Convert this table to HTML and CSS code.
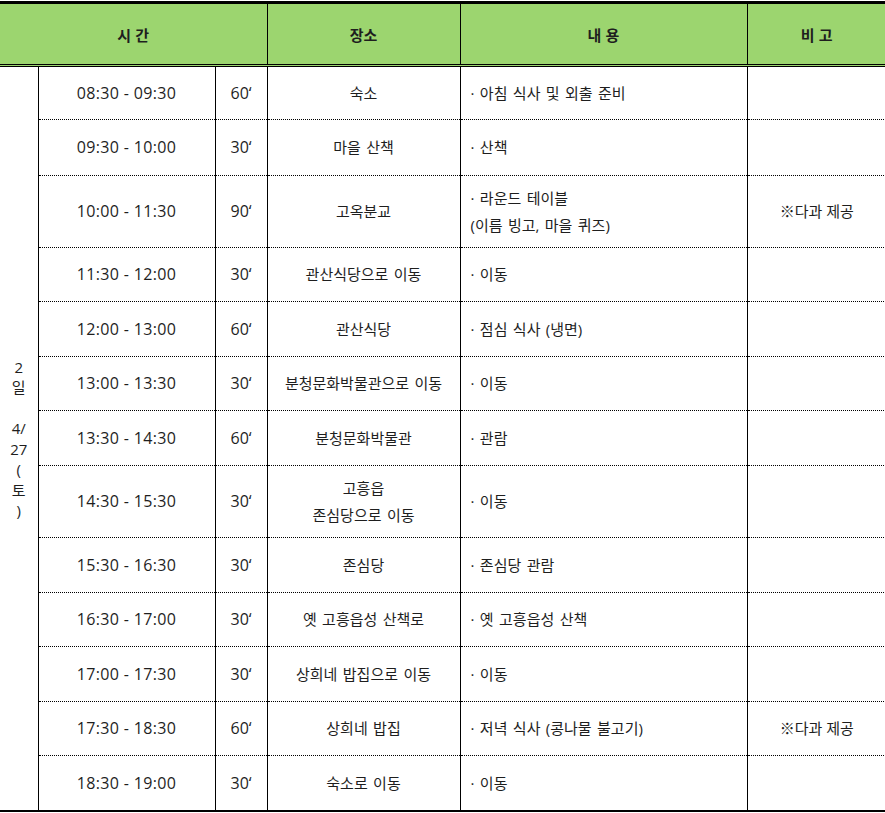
FILE: index.html
```html
<!DOCTYPE html>
<html lang="ko">
<head>
<meta charset="utf-8">
<link rel="stylesheet" href="styles.css">
</head>
<body>
<table class="sched">
  <colgroup>
    <col class="c-day"><col class="c-time"><col class="c-dur"><col class="c-place"><col class="c-desc"><col class="c-note">
  </colgroup>
  <thead>
    <tr>
      <th colspan="3">시 간</th>
      <th>장소</th>
      <th>내 용</th>
      <th>비 고</th>
    </tr>
  </thead>
  <tbody>
    <tr class="r first">
      <td class="day" rowspan="13">2<br>일<br><br>4/<br>27<br>(<br>토<br>)</td>
      <td class="time">08:30 - 09:30</td><td class="dur">60‘</td><td class="place">숙소</td><td class="desc">· 아침 식사 및 외출 준비</td><td class="note"></td>
    </tr>
    <tr class="r second">
      <td class="time">09:30 - 10:00</td><td class="dur">30‘</td><td class="place">마을 산책</td><td class="desc">· 산책</td><td class="note"></td>
    </tr>
    <tr class="r tall">
      <td class="time">10:00 - 11:30</td><td class="dur">90‘</td><td class="place">고옥분교</td><td class="desc">· 라운드 테이블<br>(이름 빙고, 마을 퀴즈)</td><td class="note">※다과 제공</td>
    </tr>
    <tr class="r a">
      <td class="time">11:30 - 12:00</td><td class="dur">30‘</td><td class="place">관산식당으로 이동</td><td class="desc">· 이동</td><td class="note"></td>
    </tr>
    <tr class="r b">
      <td class="time">12:00 - 13:00</td><td class="dur">60‘</td><td class="place">관산식당</td><td class="desc">· 점심 식사 (냉면)</td><td class="note"></td>
    </tr>
    <tr class="r a">
      <td class="time">13:00 - 13:30</td><td class="dur">30‘</td><td class="place">분청문화박물관으로 이동</td><td class="desc">· 이동</td><td class="note"></td>
    </tr>
    <tr class="r b">
      <td class="time">13:30 - 14:30</td><td class="dur">60‘</td><td class="place">분청문화박물관</td><td class="desc">· 관람</td><td class="note"></td>
    </tr>
    <tr class="r tall">
      <td class="time">14:30 - 15:30</td><td class="dur">30‘</td><td class="place">고흥읍<br>존심당으로 이동</td><td class="desc">· 이동</td><td class="note"></td>
    </tr>
    <tr class="r b">
      <td class="time">15:30 - 16:30</td><td class="dur">30‘</td><td class="place">존심당</td><td class="desc">· 존심당 관람</td><td class="note"></td>
    </tr>
    <tr class="r a">
      <td class="time">16:30 - 17:00</td><td class="dur">30‘</td><td class="place">옛 고흥읍성 산책로</td><td class="desc">· 옛 고흥읍성 산책</td><td class="note"></td>
    </tr>
    <tr class="r b">
      <td class="time">17:00 - 17:30</td><td class="dur">30‘</td><td class="place">상희네 밥집으로 이동</td><td class="desc">· 이동</td><td class="note"></td>
    </tr>
    <tr class="r a">
      <td class="time">17:30 - 18:30</td><td class="dur">60‘</td><td class="place">상희네 밥집</td><td class="desc">· 저녁 식사 (콩나물 불고기)</td><td class="note">※다과 제공</td>
    </tr>
    <tr class="r b last">
      <td class="time">18:30 - 19:00</td><td class="dur">30‘</td><td class="place">숙소로 이동</td><td class="desc">· 이동</td><td class="note"></td>
    </tr>
  </tbody>
</table>
</body>
</html>
```
FILE: styles.css
```css
html, body {
  margin: 0;
  padding: 0;
  background: #fff;
}
body {
  padding-top: 1px;
  font-family: "Open Sans", "Noto Sans CJK KR", sans-serif;
  color: #1e1e1e;
  font-size: 15px;
}
.sched {
  border-collapse: collapse;
  table-layout: fixed;
  width: 886px;
}
.c-day { width: 38px; }
.c-time { width: 177px; }
.c-dur { width: 52px; }
.c-place { width: 193px; }
.c-desc { width: 287px; }
.c-note { width: 139px; }

.sched th {
  background: #9cd56f;
  font-weight: bold;
  font-size: 15px;
  height: 60px;
  padding: 0;
  border-top: 3px solid #000;
  border-bottom: 3px double #000;
  border-left: 1px solid #000;
  border-right: 1px solid #000;
  text-align: center;
  vertical-align: middle;
  font-family: "Noto Sans CJK KR", sans-serif;
}
.sched th:first-child { border-left: none; }
.sched th:last-child { border-right: none; }

.sched td {
  padding: 0;
  text-align: center;
  vertical-align: middle;
  border-top: 1px dotted #000;
  border-bottom: 1px dotted #000;
  border-left: 1px solid #000;
  border-right: 1px solid #000;
  line-height: 27px;
}
.r.first td { height: 52px; }
.r.second td { height: 55px; }
.r.a td { height: 53px; }
.r.b td { height: 54px; }
.r.tall td { height: 71px; }
.r.last td { border-bottom: 2px solid #000; }
.sched td.day {
  height: auto;
  border-left: none;
  border-right: 1px dotted #000;
  border-bottom: 2px solid #000;
  line-height: 20.5px;
}
.sched td.time {
  border-right: 1px dotted #000;
  font-size: 16px;
  letter-spacing: 0.35px;
}
.sched td.dur {
  font-size: 16px;
  border-right: 1px solid #000;
}
.sched td.place,
.sched td.desc {
  word-spacing: 1.5px;
}
.sched td.desc {
  text-align: left;
  padding-left: 10px;
}
.sched td.note { border-right: none; }
```
